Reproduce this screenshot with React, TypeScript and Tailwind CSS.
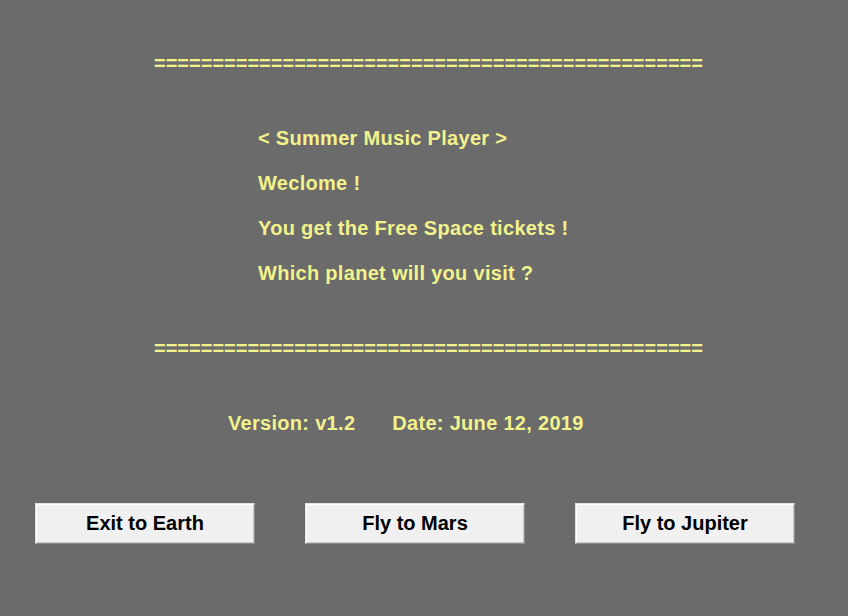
const rule = "=".repeat(47);

function MenuButton({ label }: { label: string }) {
  return (
    <button className="w-[220px] h-[41px] bg-[#f0f0f0] border border-t-[#e3e3e3] border-l-[#e3e3e3] border-r-[#8c8c8c] border-b-[#8c8c8c] shadow-[inset_1px_1px_0_#ffffff,inset_-1px_-1px_0_#c8c8c8] text-[20px] font-bold text-black leading-none pb-[1px]">
      {label}
    </button>
  );
}

export default function App() {
  return (
    <div className="w-[848px] h-[616px] bg-[#6b6b6b] font-['Liberation_Sans',Arial,sans-serif] font-bold text-[#f2f28c] text-[20px] overflow-hidden">
      <div className="pt-[51px] pl-[154px] leading-[24px] h-[75px] whitespace-nowrap">{rule}</div>

      <div className="pl-[258px] mt-[51px] flex flex-col gap-[21px] leading-[24px] tracking-[0.3px] whitespace-nowrap">
        <div>&lt; Summer Music Player &gt;</div>
        <div>Weclome !</div>
        <div>You get the Free Space tickets !</div>
        <div>Which planet will you visit ?</div>
      </div>

      <div className="pl-[154px] mt-[51px] leading-[24px] whitespace-nowrap">{rule}</div>

      <div className="pl-[228px] mt-[51px] leading-[24px] tracking-[0.3px] flex gap-[37px] whitespace-nowrap">
        <span>Version: v1.2</span>
        <span>Date: June 12, 2019</span>
      </div>

      <div className="pl-[35px] mt-[68px] flex gap-[50px]">
        <MenuButton label="Exit to Earth" />
        <MenuButton label="Fly to Mars" />
        <MenuButton label="Fly to Jupiter" />
      </div>
    </div>
  );
}
